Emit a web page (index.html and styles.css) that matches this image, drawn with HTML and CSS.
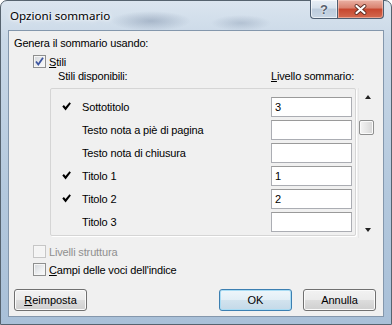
FILE: index.html
```html
<!DOCTYPE html>
<html lang="it">
<head>
    <meta charset="UTF-8">
    <title>Opzioni sommario</title>
    <link rel="stylesheet" href="styles.css">
</head>
<body>
    <div class="window">
        <div class="titlebar">
            <span class="title">Opzioni sommario</span>
            <div class="caption">
                <div class="cap help">?</div>
                <div class="cap close">
                    <svg width="13" height="11" viewBox="0 0 13 11">
                        <path d="M2.5 2 L10.5 9 M10.5 2 L2.5 9" stroke="#5a2b22" stroke-width="3.8" stroke-linecap="round"/>
                        <path d="M2.5 2 L10.5 9 M10.5 2 L2.5 9" stroke="#fff" stroke-width="2.2" stroke-linecap="round"/>
                    </svg>
                </div>
            </div>
        </div>

        <div class="client">
            <p class="label">Genera il sommario usando:</p>

            <div class="check-row styles-row">
                <span class="box">
                    <svg width="11" height="11" viewBox="0 0 11 11"><path d="M2 5.5 L4.3 8.5 L9 1.8" fill="none" stroke="#3d55a0" stroke-width="1.8"/></svg>
                </span>
                <span><u>S</u>tili</span>
            </div>

            <div class="list-head">
                <span class="head-name">Stili disponibili:</span>
                <span><u>L</u>ivello sommario:</span>
            </div>

            <div class="list-wrap">
                <div class="list">
                    <div class="row"><span class="mark"><svg width="9" height="9" viewBox="0 0 9 9"><path d="M0.3 4.6 L1.9 3 L3.5 4.9 L7.5 0.2 L8.9 1.5 L3.6 8.4 Z"/></svg></span><span>Sottotitolo</span><div class="field">3</div></div>
                    <div class="row"><span class="mark"></span><span>Testo nota a piè di pagina</span><div class="field"></div></div>
                    <div class="row"><span class="mark"></span><span>Testo nota di chiusura</span><div class="field"></div></div>
                    <div class="row"><span class="mark"><svg width="9" height="9" viewBox="0 0 9 9"><path d="M0.3 4.6 L1.9 3 L3.5 4.9 L7.5 0.2 L8.9 1.5 L3.6 8.4 Z"/></svg></span><span>Titolo 1</span><div class="field">1</div></div>
                    <div class="row"><span class="mark"><svg width="9" height="9" viewBox="0 0 9 9"><path d="M0.3 4.6 L1.9 3 L3.5 4.9 L7.5 0.2 L8.9 1.5 L3.6 8.4 Z"/></svg></span><span>Titolo 2</span><div class="field">2</div></div>
                    <div class="row"><span class="mark"></span><span>Titolo 3</span><div class="field"></div></div>
                </div>
                <div class="scrollbar">
                    <div class="arrow up"></div>
                    <div class="track"><div class="thumb"></div></div>
                    <div class="arrow down"></div>
                </div>
            </div>

            <div class="check-row disabled outline-row">
                <span class="box"></span>
                <span>Livelli struttura</span>
            </div>
            <div class="check-row">
                <span class="box"></span>
                <span><u>C</u>ampi delle voci dell'indice</span>
            </div>

            <div class="buttons">
                <button class="btn"><u>R</u>eimposta</button>
                <span class="spacer"></span>
                <button class="btn default">OK</button>
                <button class="btn">Annulla</button>
            </div>
        </div>
    </div>
</body>
</html>
```

FILE: styles.css
```css
* {
    box-sizing: border-box;
}
body {
    margin: 0;
    background: #fff;
    font-family: "Liberation Sans", Arial, sans-serif;
    font-size: 11px;
    letter-spacing: -0.15px;
    color: #000;
}
u {
    text-decoration: underline;
    text-underline-offset: 1px;
}

/* window frame */
.window {
    width: 392px;
    height: 325px;
    border: 1px solid #56636f;
    border-radius: 7px 7px 0 0;
    padding: 0 7px 7px 7px;
    display: flex;
    flex-direction: column;
    background:
        radial-gradient(ellipse 40px 10px at 150px 20px, rgba(90, 110, 140, 0.35), transparent),
        radial-gradient(ellipse 30px 8px at 240px 22px, rgba(90, 110, 140, 0.25), transparent),
        linear-gradient(180deg, #dbe5ef 0%, #c9d8e7 12%, #b3c8dd 60%, #a9c0d8 100%);
}
.titlebar {
    height: 29px;
    display: flex;
    align-items: flex-start;
}
.title {
    padding: 7px 0 0 2px;
    line-height: 15px;
    font-family: "Noto Sans", "Open Sans", sans-serif;
    font-size: 11.6px;
    letter-spacing: 0;
    text-shadow: 0 0 6px #fff, 0 0 3px #fff;
}
.caption {
    margin-left: auto;
    margin-top: -1px;
    display: flex;
}
.cap {
    height: 19px;
    border: 1px solid #4f5f72;
    border-top: none;
    display: flex;
    align-items: center;
    justify-content: center;
}
.help {
    width: 27px;
    border-radius: 0 0 0 4px;
    border-right: none;
    background: linear-gradient(180deg, #e9eff6 0%, #d6e1ec 45%, #bccbdc 50%, #c8d6e4 100%);
    box-shadow: inset 0 0 0 1px rgba(255, 255, 255, 0.6);
    font-weight: bold;
    font-size: 13px;
    color: #56606c;
    text-shadow: 0 0 1px #fff, 0 0 2px #fff;
}
.close {
    width: 47px;
    border-radius: 0 0 4px 0;
    background: linear-gradient(180deg, #eab1a4 0%, #d9816e 45%, #c7462e 50%, #d36a4f 100%);
    box-shadow: inset 0 0 0 1px rgba(255, 220, 210, 0.5);
}

/* client area */
.client {
    height: 287px;
    background: #f0f0f0;
    border: 1px solid #8497ac;
    padding: 0 7px 0 5px;
    display: flex;
    flex-direction: column;
}
.label {
    margin: 5px 0 0 0;
    line-height: 15px;
}
.check-row {
    height: 15px;
    display: flex;
    align-items: center;
    gap: 3px;
    margin-left: 19px;
}
.styles-row {
    margin-top: 3px;
}
.box {
    width: 13px;
    height: 13px;
    border: 1px solid #8e8f8f;
    background: linear-gradient(135deg, #d2d5d9 0%, #eef0f2 60%, #fafafa 100%);
    box-shadow: inset 0 0 0 1px #f6f6f6;
    display: flex;
    align-items: center;
    justify-content: center;
}
.disabled {
    color: #8f8f8f;
}
.disabled .box {
    border-color: #c6c6c6;
    background: #f4f4f4;
}
.outline-row {
    margin-top: 6px;
}
.outline-row + .check-row {
    margin-top: 3px;
}

.list-head {
    display: flex;
    line-height: 15px;
}
.head-name {
    margin-left: 44px;
    width: 213px;
}

.list-wrap {
    margin-top: 4px;
    display: flex;
}
.list {
    width: 309px;
    height: 148px;
    margin-left: 36px;
    border: 1px solid #d5d5d5;
    border-radius: 2px;
    box-shadow: 1px 1px 0 #fff;
    padding: 6px 0 0 11px;
}
.row {
    height: 23px;
    display: grid;
    grid-template-columns: 20px 189px 81px;
    align-items: center;
}
.mark {
    display: flex;
    align-items: center;
}
.field {
    height: 20px;
    background: #fff;
    border: 1px solid #abadb3;
    border-top-color: #9a9a9a;
    padding: 1px 3px;
    line-height: 16px;
}

.scrollbar {
    width: 18px;
    height: 150px;
    margin-left: 2px;
    display: flex;
    flex-direction: column;
    border-left: 1px solid #e6e6e6;
}
.arrow {
    height: 17px;
    display: flex;
    align-items: center;
    justify-content: center;
}
.arrow::before {
    content: '';
    border-left: 3.5px solid transparent;
    border-right: 3.5px solid transparent;
}
.up::before {
    border-bottom: 4px solid #222;
}
.down::before {
    border-top: 4px solid #222;
}
.track {
    flex: 1;
}
.thumb {
    width: 15px;
    height: 15px;
    margin-top: 15px;
    border: 1px solid #8e8f8f;
    border-radius: 2px;
    background: linear-gradient(90deg, #f4f4f4 0%, #e6e6e6 50%, #d6d6d6 100%);
    box-shadow: inset 0 0 0 1px #fafafa;
}

.buttons {
    margin-top: 12px;
    display: flex;
    gap: 11px;
}
.spacer {
    flex: 1;
}
.btn {
    width: 73px;
    height: 22px;
    padding: 0;
    font: inherit;
    color: #000;
    border: 1px solid #707070;
    border-radius: 3px;
    background: linear-gradient(180deg, #f2f2f2 0%, #ebebeb 50%, #dddddd 50%, #cfcfcf 100%);
    box-shadow: inset 0 0 0 1px #fbfbfb;
}
.btn.default {
    border-color: #3c7fb1;
    background: linear-gradient(180deg, #eef6fb 0%, #e2eef6 50%, #d2e3ee 50%, #c4d9e8 100%);
    box-shadow: inset 0 0 0 1px #a9dcf4;
}
```
